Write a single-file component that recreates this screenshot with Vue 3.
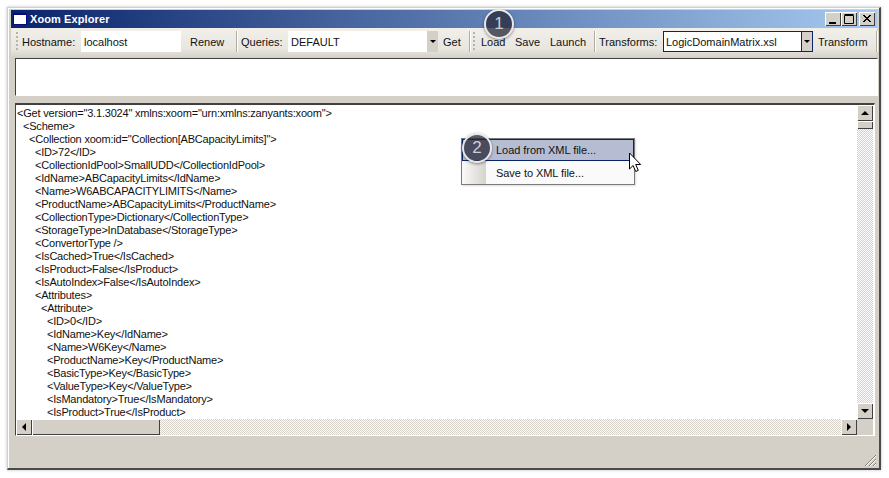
<script setup>
const lines = [
  [0, '<Get version="3.1.3024" xmlns:xoom="urn:xmlns:zanyants:xoom">'],
  [1, '<Scheme>'],
  [2, '<Collection xoom:id="Collection[ABCapacityLimits]">'],
  [3, '<ID>72</ID>'],
  [3, '<CollectionIdPool>SmallUDD</CollectionIdPool>'],
  [3, '<IdName>ABCapacityLimits</IdName>'],
  [3, '<Name>W6ABCAPACITYLIMITS</Name>'],
  [3, '<ProductName>ABCapacityLimits</ProductName>'],
  [3, '<CollectionType>Dictionary</CollectionType>'],
  [3, '<StorageType>InDatabase</StorageType>'],
  [3, '<ConvertorType />'],
  [3, '<IsCached>True</IsCached>'],
  [3, '<IsProduct>False</IsProduct>'],
  [3, '<IsAutoIndex>False</IsAutoIndex>'],
  [3, '<Attributes>'],
  [4, '<Attribute>'],
  [5, '<ID>0</ID>'],
  [5, '<IdName>Key</IdName>'],
  [5, '<Name>W6Key</Name>'],
  [5, '<ProductName>Key</ProductName>'],
  [5, '<BasicType>Key</BasicType>'],
  [5, '<ValueType>Key</ValueType>'],
  [5, '<IsMandatory>True</IsMandatory>'],
  [5, '<IsProduct>True</IsProduct>'],
]
</script>

<template>
  <div class="page">
    <div class="window">
      <div class="titlebar">
        <span class="appicon"></span>
        <span class="title">Xoom Explorer</span>
        <span class="winbtns">
          <span class="winbtn"><svg width="14" height="12"><rect x="3" y="9" width="7" height="2" fill="#000"/></svg></span>
          <span class="winbtn"><svg width="14" height="12"><path d="M2.5 2.5h9v8h-9z M2.5 1.5h9" fill="none" stroke="#000"/></svg></span>
          <span class="winbtn close"><svg width="14" height="12"><path d="M3 2l7 7M4 2l7 7M10 2l-7 7M11 2l-7 7" stroke="#000" fill="none"/></svg></span>
        </span>
      </div>

      <div class="toolbar">
        <span class="grip"></span>
        <span class="label hostlabel">Hostname:</span>
        <span class="field hostfield">localhost</span>
        <span class="label renew">Renew</span>
        <span class="sep seprenew"></span>
        <span class="label querylabel">Queries:</span>
        <span class="combo querycombo">
          <span class="combotext">DEFAULT</span>
          <span class="arrowbtn"><i></i></span>
        </span>
        <span class="label get">Get</span>
        <span class="sep sepget"></span>
        <span class="grip gripload"></span>
        <span class="label load">Load</span>
        <span class="label save">Save</span>
        <span class="label launch">Launch</span>
        <span class="sep seplaunch"></span>
        <span class="label translabel">Transforms:</span>
        <span class="combo transcombo">
          <span class="combotext">LogicDomainMatrix.xsl</span>
          <span class="arrowbtn"><i></i></span>
        </span>
        <span class="label transform">Transform</span>
        <span class="sep septransform"></span>
      </div>

      <div class="inputbox"></div>

      <div class="xmlpanel">
        <div class="xml">
          <div v-for="(l, i) in lines" :key="i" class="line" :style="{ paddingLeft: l[0] * 6 + 'px' }">{{ l[1] }}</div>
        </div>
        <div class="vbar">
          <span class="sbtn"><i class="tri up"></i></span>
          <span class="sbtn thumbv"></span>
          <span class="track"></span>
          <span class="sbtn"><i class="tri down"></i></span>
        </div>
        <div class="hbar">
          <span class="sbtn"><i class="tri left"></i></span>
          <span class="sbtn thumbh"></span>
          <span class="track"></span>
          <span class="sbtn"><i class="tri right"></i></span>
        </div>
        <div class="corner"></div>
      </div>

      <div class="status">
        <svg class="sizegrip" width="13" height="13" viewBox="0 0 13 13">
          <path d="M12 1L1 12M12 5L5 12M12 9L9 12" stroke="#808080" fill="none"/>
          <path d="M12 2L2 12M12 6L6 12M12 10L10 12" stroke="#fff" fill="none"/>
        </svg>
      </div>
    </div>

    <div class="menu">
      <div class="gutter"></div>
      <div class="items">
        <div class="item active">Load from XML file...</div>
        <div class="item">Save to XML file...</div>
      </div>
    </div>

    <div class="badge b1">1</div>
    <div class="badge b2">2</div>

    <svg class="cursor" width="14" height="22" viewBox="0 0 14 22">
      <path d="M1.5 1v16l3.6-3.5 2.6 6 2.6-1.1-2.6-5.9h5z" fill="#fff" stroke="#000" stroke-width="1"/>
    </svg>
  </div>
</template>

<style>
html, body { margin: 0; background: #fff; }
</style>

<style scoped>
.page {
  position: relative;
  width: 889px;
  height: 478px;
  padding: 7px 8px 8px 7px;
  box-sizing: border-box;
  background: #fff;
  overflow: hidden;
  font-family: Tahoma, "Liberation Sans", Arial, sans-serif;
  font-size: 11px;
  color: #111;
}
.window {
  height: 100%;
  box-sizing: border-box;
  display: flex;
  flex-direction: column;
  background: #d4d0c8;
  border-top: 1px solid #d4d0c8;
  border-left: 1px solid #d4d0c8;
  border-right: 2px solid #4a4a4a;
  border-bottom: 2px solid #4a4a4a;
  box-shadow: inset 1px 1px 0 #fff, 0 0 3px rgba(0, 0, 0, .25);
  padding: 2px 2px 0 3px;
}
.titlebar {
  height: 18px;
  flex: none;
  display: flex;
  align-items: center;
  background: linear-gradient(90deg, #0a246a, #a6caf0);
  padding: 0 2px 0 2px;
}
.appicon {
  width: 14px;
  height: 12px;
  box-sizing: border-box;
  background: #fff;
  border: 1px solid #0a0a80;
  border-top-width: 2px;
  margin-right: 3px;
}
.title { color: #fff; font-weight: 700; font-size: 11px; letter-spacing: .1px; }
.winbtns { margin-left: auto; display: flex; }
.winbtn {
  width: 16px;
  height: 14px;
  box-sizing: border-box;
  background: #d4d0c8;
  display: flex;
  align-items: center;
  justify-content: center;
  box-shadow: inset 1px 1px 0 #fff, inset -1px -1px 0 #404040;
}
.winbtn.close { margin-left: 2px; }
.toolbar {
  height: 30px;
  flex: none;
  box-sizing: border-box;
  display: flex;
  align-items: center;
  background: linear-gradient(#f1efe9, #e8e6df 70%, #d4d0c8);
  padding: 0 0 3px 5px;
}
.grip {
  width: 2px;
  height: 20px;
  flex: none;
  background: repeating-linear-gradient(#b8b4aa 0 2px, transparent 2px 4px);
}
.label { white-space: nowrap; flex: none; font-size: 11px; }
.hostlabel { margin-left: 4px; width: 59px; }
.field, .combo { background: #fff; height: 21px; flex: none; box-sizing: border-box; display: flex; align-items: center; }
.hostfield { width: 100px; padding-left: 3px; }
.renew { margin-left: 9px; width: 46px; }
.sep { width: 1px; height: 21px; background: #b0aca2; box-shadow: 1px 0 0 #fff; flex: none; }
.querylabel { margin-left: 4px; width: 47px; }
.querycombo { width: 150px; }
.combotext { flex: 1; padding-left: 3px; }
.arrowbtn { width: 11px; height: 100%; background: #d4d0c8; display: flex; align-items: center; justify-content: center; }
.arrowbtn i { border: 3px solid transparent; border-top-color: #000; border-bottom: 0; }
.get { margin-left: 5px; width: 26px; }
.gripload { margin-left: 3px; }
.load { margin-left: 6px; width: 34px; }
.save { width: 35px; }
.launch { width: 44px; }
.translabel { margin-left: 4px; width: 64px; }
.transcombo { width: 150px; border: 1px solid #0a246a; }
.transcombo .combotext { padding-left: 2px; }
.transcombo .arrowbtn { border-left: 1px solid #0a246a; box-sizing: content-box; width: 10px; }
.transform { margin-left: 5px; width: 58px; }
.inputbox {
  flex: none;
  height: 38px;
  margin: 0 -1px 0 4px;
  box-sizing: border-box;
  background: #fff;
  border-top: 1px solid #404040;
  border-left: 1px solid #404040;
  border-right: 1px solid #fff;
  border-bottom: 1px solid #fff;
}
.xmlpanel {
  flex: none;
  height: 333px;
  margin: 7px 2px 0 4px;
  box-sizing: border-box;
  display: grid;
  grid-template-columns: 1fr 16px;
  grid-template-rows: 1fr 16px;
  background: #fff;
  border-top: 2px solid #404040;
  border-left: 1px solid #404040;
  border-right: 1px solid #fff;
  border-bottom: 1px solid #fff;
  padding-right: 1px;
}
.xml { overflow: hidden; padding: 2px 0 0 1px; background: #fff; min-height: 0; }
.line { height: 13px; line-height: 13px; white-space: nowrap; font-size: 11px; letter-spacing: -.2px; }
.vbar { display: flex; flex-direction: column; }
.hbar { display: flex; }
.track {
  flex: 1;
  background: repeating-conic-gradient(#d4d0c8 0 25%, #fff 0 50%) 0 0 / 2px 2px;
}
.sbtn {
  width: 16px;
  height: 16px;
  flex: none;
  box-sizing: border-box;
  background: #d4d0c8;
  display: flex;
  align-items: center;
  justify-content: center;
  box-shadow: inset 1px 1px 0 #fff, inset -1px -1px 0 #404040;
}
.thumbv { height: 8px; }
.thumbh { width: 128px; }
.corner { background: #d4d0c8; }
.tri { width: 0; height: 0; border: 4px solid transparent; }
.tri.up { border-bottom-color: #000; border-top: 0; }
.tri.down { border-top-color: #000; border-bottom: 0; }
.tri.left { border-right-color: #000; border-left: 0; }
.tri.right { border-left-color: #000; border-right: 0; }
.status { flex: 1; position: relative; background: #d4d0c8; }
.sizegrip { position: absolute; right: 0; bottom: 1px; }
.menu {
  position: absolute;
  left: 461px;
  top: 138px;
  width: 174px;
  height: 47px;
  box-sizing: border-box;
  display: flex;
  background: #fbfafa;
  border: 1px solid #7a7a7a;
  box-shadow: 1px 1px 2px rgba(0, 0, 0, .15);
}
.gutter {
  width: 24px;
  background: linear-gradient(90deg, #fbfafa, #d6d3cc);
}
.items { position: absolute; inset: 0; }
.item { height: 22px; line-height: 22px; padding-left: 34px; font-size: 11px; margin-top: 1px; letter-spacing: -.05px; }
.item:first-child { margin-top: 0; }
.item.active {
  background: #b6bdd2;
  border: 1px solid #0a246a;
  box-sizing: border-box;
  line-height: 20px;
  padding-left: 33px;
}
.badge {
  position: absolute;
  width: 30px;
  height: 30px;
  box-sizing: border-box;
  border: 2px solid #e8e8e8;
  border-radius: 50%;
  background: rgba(40, 42, 58, .77);
  color: #cfcfcf;
  font-family: "Liberation Sans", Arial, sans-serif;
  font-size: 17px;
  line-height: 26px;
  text-align: center;
  box-shadow: 0 1px 3px rgba(0, 0, 0, .45);
}
.b1 { left: 484px; top: 9px; }
.b2 { left: 462px; top: 133px; }
.cursor { position: absolute; left: 628px; top: 152px; }
</style>
